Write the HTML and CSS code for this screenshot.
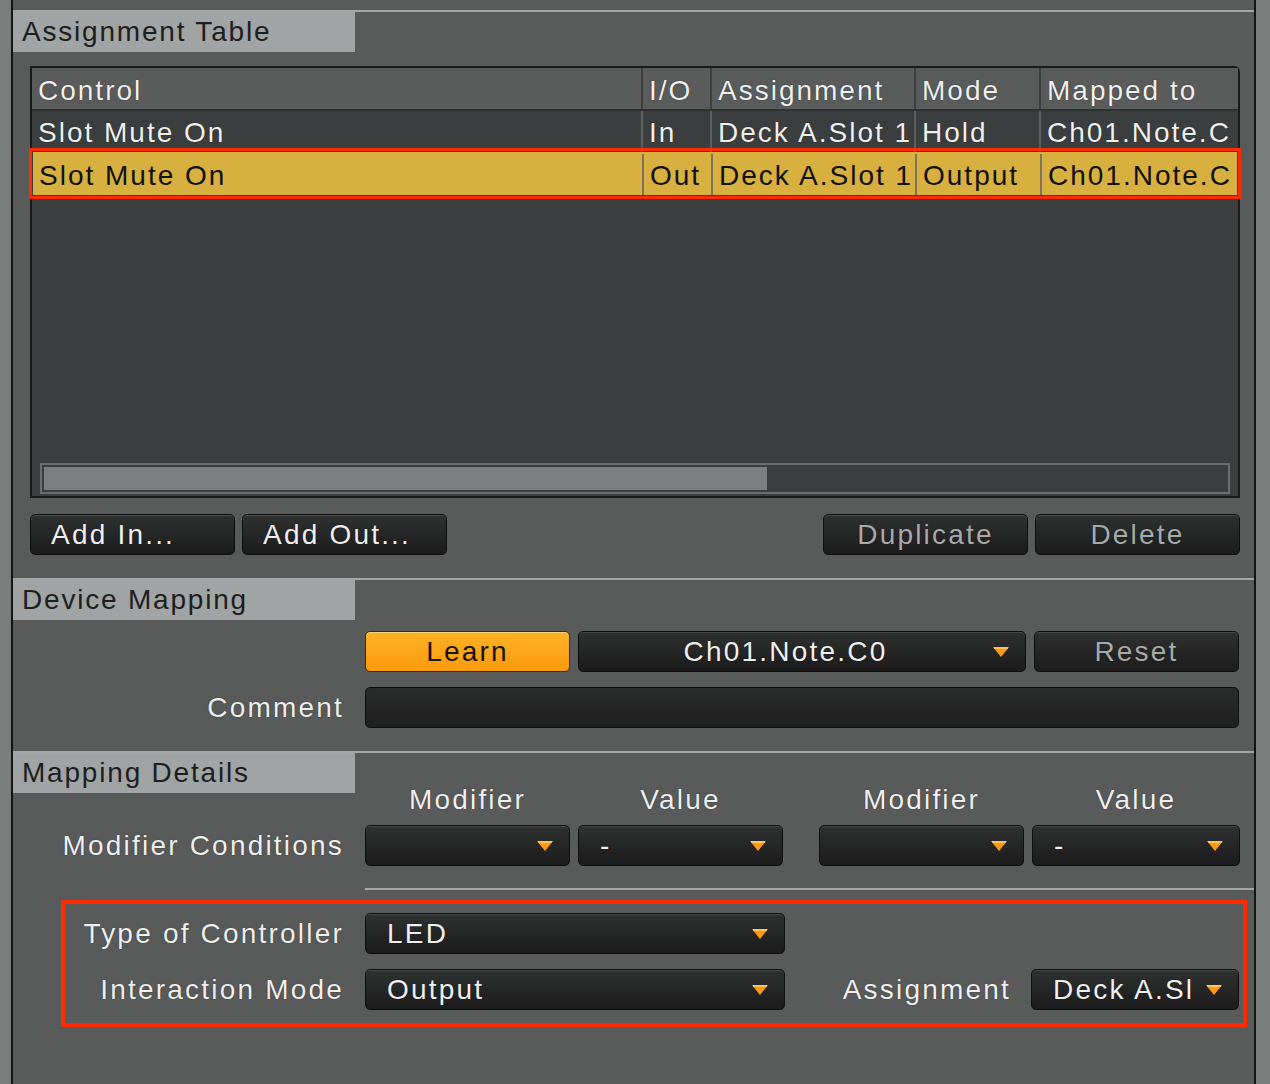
FILE: index.html
```html
<!DOCTYPE html>
<html lang="en">
<head>
  <meta charset="UTF-8">
  <title>Controller Manager</title>
  <link rel="stylesheet" href="styles.css">
</head>
<body>
  <div class="panel">

    <!-- ASSIGNMENT TABLE -->
    <div class="section first">
      <div class="tab">Assignment Table</div>
      <div class="tableBox">
        <div class="trow head">
          <div class="cell">Control</div>
          <div class="cell">I/O</div>
          <div class="cell">Assignment</div>
          <div class="cell">Mode</div>
          <div class="cell">Mapped to</div>
        </div>
        <div class="trow">
          <div class="cell">Slot Mute On</div>
          <div class="cell">In</div>
          <div class="cell">Deck A.Slot 1</div>
          <div class="cell">Hold</div>
          <div class="cell">Ch01.Note.C</div>
        </div>
        <div class="trow selected">
          <div class="cell">Slot Mute On</div>
          <div class="cell">Out</div>
          <div class="cell">Deck A.Slot 1</div>
          <div class="cell">Output</div>
          <div class="cell">Ch01.Note.C</div>
        </div>
        <div class="tableEmpty"></div>
        <div class="scrollbar"><div class="thumb"></div></div>
      </div>
      <div class="tableButtons">
        <button class="btn left">Add In...</button>
        <button class="btn left">Add Out...</button>
        <div class="spacer"></div>
        <button class="btn dim">Duplicate</button>
        <button class="btn dim">Delete</button>
      </div>
    </div>

    <!-- DEVICE MAPPING -->
    <div class="section">
      <div class="tab">Device Mapping</div>
      <div class="formRow learnRow">
        <div class="label"></div>
        <div class="learnControls">
          <button class="btn learn">Learn</button>
          <div class="drop center">
            <span>Ch01.Note.C0</span>
            <svg class="arrow" width="16" height="10" viewBox="0 0 16 10"><polygon points="0,0 16,0 8,10" fill="#ff9812"/><rect x="1" y="0" width="14" height="2" fill="#ffc25a"/></svg>
          </div>
          <button class="btn dim">Reset</button>
        </div>
      </div>
      <div class="formRow commentRow">
        <div class="label">Comment</div>
        <div class="textField"></div>
      </div>
    </div>

    <!-- MAPPING DETAILS -->
    <div class="section">
      <div class="detailsHead">
        <div class="tab">Mapping Details</div>
        <div class="colHeads modGrid">
          <div>Modifier</div>
          <div>Value</div>
          <div>Modifier</div>
          <div>Value</div>
        </div>
      </div>
      <div class="formRow">
        <div class="label">Modifier Conditions</div>
        <div class="modGrid">
          <div class="drop">
            <span></span>
            <svg class="arrow" width="16" height="10" viewBox="0 0 16 10"><polygon points="0,0 16,0 8,10" fill="#ff9812"/><rect x="1" y="0" width="14" height="2" fill="#ffc25a"/></svg>
          </div>
          <div class="drop">
            <span>-</span>
            <svg class="arrow" width="16" height="10" viewBox="0 0 16 10"><polygon points="0,0 16,0 8,10" fill="#ff9812"/><rect x="1" y="0" width="14" height="2" fill="#ffc25a"/></svg>
          </div>
          <div class="drop">
            <span></span>
            <svg class="arrow" width="16" height="10" viewBox="0 0 16 10"><polygon points="0,0 16,0 8,10" fill="#ff9812"/><rect x="1" y="0" width="14" height="2" fill="#ffc25a"/></svg>
          </div>
          <div class="drop">
            <span>-</span>
            <svg class="arrow" width="16" height="10" viewBox="0 0 16 10"><polygon points="0,0 16,0 8,10" fill="#ff9812"/><rect x="1" y="0" width="14" height="2" fill="#ffc25a"/></svg>
          </div>
        </div>
      </div>
      <div class="divider"></div>

      <div class="highlight">
        <div class="hlRow">
          <div class="label">Type of Controller</div>
          <div class="drop wide">
            <span>LED</span>
            <svg class="arrow" width="16" height="10" viewBox="0 0 16 10"><polygon points="0,0 16,0 8,10" fill="#ff9812"/><rect x="1" y="0" width="14" height="2" fill="#ffc25a"/></svg>
          </div>
        </div>
        <div class="hlRow">
          <div class="label">Interaction Mode</div>
          <div class="drop wide">
            <span>Output</span>
            <svg class="arrow" width="16" height="10" viewBox="0 0 16 10"><polygon points="0,0 16,0 8,10" fill="#ff9812"/><rect x="1" y="0" width="14" height="2" fill="#ffc25a"/></svg>
          </div>
          <div class="spacer"></div>
          <div class="label short">Assignment</div>
          <div class="drop narrow">
            <span>Deck A.Sl</span>
            <svg class="arrow" width="16" height="10" viewBox="0 0 16 10"><polygon points="0,0 16,0 8,10" fill="#ff9812"/><rect x="1" y="0" width="14" height="2" fill="#ffc25a"/></svg>
          </div>
        </div>
      </div>
    </div>

  </div>
</body>
</html>
```

FILE: styles.css
```css
:root {
  --outer: #7b7d7d;
  --panel: #595a5a;
  --edge: #141414;
  --rule: #a3a7a7;
  --tab-bg: #a0a4a4;
  --row-bg: #3a3e3f;
  --text: #f0f0f0;
  --dim-text: #a9abab;
  --orange: #ff9812;
  --red: #ff2a00;
}
* { box-sizing:border-box; }
html, body { margin:0; height:100%; background:var(--outer); }
body {
  font-family:"Liberation Sans", Arial, sans-serif;
  font-size:28px;
  letter-spacing:2.2px;
  color:var(--text);
  text-shadow:0 0 1px rgba(0,0,0,0.7);
}

.panel {
  margin:0 14px 0 11px;
  min-height:1084px;
  background:var(--panel);
  border-left:2px solid var(--edge);
  border-right:2px solid var(--edge);
  padding-top:10px;
}

/* SECTIONS */
.section {
  border-top:2px solid var(--rule);
  padding-bottom:23px;
}
.tab {
  width:342px; height:40px; line-height:40px;
  padding-left:9px;
  background:var(--tab-bg);
  color:#1e1e1e;
  letter-spacing:1.8px;
  text-shadow:none;
}

/* TABLE */
.tableBox {
  margin:14px 14px 0 17px;
  height:432px;
  background:var(--row-bg);
  border:2px solid #1a1a1a;
  border-radius:0 6px 0 0;
  display:flex; flex-direction:column;
}
.trow {
  display:grid;
  grid-template-columns:609px 69px 204px 125px 1fr;
  height:43px; line-height:44px;
  border-top:2px solid #2f3233;
}
.trow.head {
  height:41px; line-height:46px;
  background:#5a5b5b;
  border-top:none;
}
.cell {
  padding-left:6px;
  white-space:nowrap; overflow:hidden;
  border-left:2px solid #5d6162;
  letter-spacing:2px;
}
.cell:first-child { border-left:none; }
.trow.head .cell { border-left-color:#3c3d3d; }
.trow.head .cell:first-child { border-left:none; }
.trow.selected {
  background:#d7b03f;
  color:#111;
  text-shadow:none;
  border-top-color:#d7b03f;
  outline:3px solid var(--red);
  outline-offset:1px;
  margin:0 1px;
}
.trow.selected .cell { border-left-color:#7b7260; }
.trow.selected .cell:first-child { border-left:none; }
.tableEmpty { flex:1; }
.scrollbar {
  margin:0 8px 2px 8px;
  height:31px;
  border:2px solid #6a6e6f;
  padding:2px;
}
.thumb {
  width:723px; height:100%;
  background:#7b7f80;
}

/* BUTTONS */
.tableButtons {
  display:flex; gap:7px;
  margin:16px 14px 0 17px;
}
.spacer { flex:1; }
.btn {
  width:205px; height:41px;
  font:inherit; letter-spacing:inherit;
  color:var(--text);
  text-shadow:inherit;
  background:linear-gradient(#2f3030, #1c1c1c);
  border:1px solid #0e0e0e;
  border-radius:5px;
  box-shadow:inset 0 1px 0 #4a4a4a;
  padding:0;
  text-align:center;
}
.btn.left { text-align:left; padding-left:20px; }
.btn.dim { color:var(--dim-text); }
.btn.learn {
  color:#141414;
  text-shadow:none;
  background:linear-gradient(#ffb226, #fb9a0c);
  box-shadow:inset 0 1px 0 #ffd27a;
  border-color:#3a2a10;
}

/* FORM ROWS */
.formRow {
  display:flex; align-items:center;
  margin-right:15px;
}
.label {
  width:352px; flex:none;
  text-align:right;
  padding-right:21px;
  white-space:nowrap;
}
.learnRow { margin-top:11px; }
.learnControls {
  flex:1;
  display:flex; gap:8px;
}
.learnControls .drop { flex:1; }
.commentRow { margin-top:15px; }
.textField {
  flex:1; height:41px;
  background:linear-gradient(#2a2b2b, #1f1f1f);
  border:1px solid #0e0e0e;
  border-radius:5px;
}

/* DROPDOWNS */
.drop {
  height:41px;
  display:flex; align-items:center;
  padding:0 16px 0 21px;
  background:linear-gradient(#2f3030, #1b1b1b);
  border:1px solid #0e0e0e;
  border-radius:5px;
  box-shadow:inset 0 1px 0 #474747;
  white-space:nowrap;
}
.drop span { flex:1; overflow:hidden; }
.drop.center span { text-align:center; padding-right:14px; }
.arrow { flex:none; margin-left:8px; }

/* MAPPING DETAILS */
.detailsHead { display:flex; }
.detailsHead .tab { flex:none; }
.modGrid {
  display:grid;
  grid-template-columns:205px 205px 20px 205px 208px;
  column-gap:8px;
}
.modGrid > :nth-child(3) { grid-column:4; }
.colHeads {
  margin-left:10px;
  padding-top:32px;
  line-height:30px;
  text-align:center;
}
.detailsHead + .formRow { margin-top:10px; }
.divider {
  margin:22px 0 0 352px;
  height:2px;
  background:var(--rule);
}

/* HIGHLIGHTED GROUP */
.highlight {
  margin:10px 7px 0 48px;
  border:4px solid var(--red);
  padding:9px 4px 13px 0;
  display:flex; flex-direction:column; gap:15px;
}
.hlRow { display:flex; align-items:center; }
.hlRow .label { width:300px; }
.hlRow .label.short { width:auto; padding-right:20px; }
.drop.wide { width:420px; }
.drop.narrow { width:208px; }
```
